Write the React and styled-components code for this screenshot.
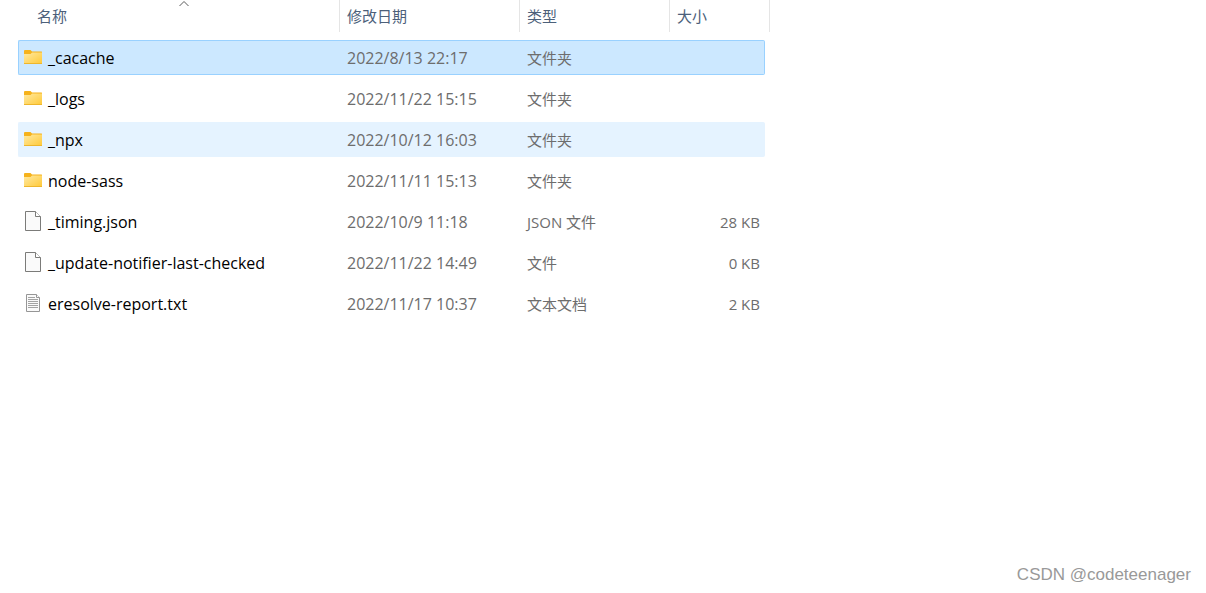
import React from "react";
import styled, { createGlobalStyle, css } from "styled-components";

const GlobalStyle = createGlobalStyle`
  *, *::before, *::after { box-sizing: border-box; }
  body {
    margin: 0;
    background: #fff;
    font-family: "Open Sans", "Noto Sans CJK SC", sans-serif;
  }
`;

const Page = styled.main`
  display: flex;
  flex-direction: column;
  min-height: 100vh;
  padding-left: 18px;
`;

const FileTable = styled.table`
  width: 100%;
  max-width: 752px;
  margin-top: -6px;
  table-layout: fixed;
  border-collapse: separate;
  border-spacing: 0 6px;
`;

const Column = styled.col`
  width: ${(p) => p.$width || "auto"};
`;

const HeaderCell = styled.th`
  padding: 0 0 2px ${(p) => (p.$first ? "12px" : "0")};
`;

const SortButton = styled.button`
  position: relative;
  display: block;
  width: 100%;
  height: 32px;
  padding: 0 7px;
  border: 0;
  border-right: 1px solid #e5e5e5;
  background: none;
  color: #4c607a;
  font-family: inherit;
  font-size: 15px;
  line-height: 32px;
  text-align: left;
`;

const SortArrow = styled.svg`
  position: absolute;
  top: 0;
  left: 50%;
  width: 10px;
  height: 7px;
  margin-left: -5px;
`;

const highlights = {
  selected: css`
    background: #cce8ff;
    border-color: #99d1ff;
  `,
  hovered: css`
    background: #e5f3ff;
    border-color: #e5f3ff;
  `,
};

const Cell = styled.td`
  height: 35px;
  padding: 0 7px;
  border: 1px solid transparent;
  border-width: 1px 0;
  color: #6d6d6d;
  font-size: ${(p) => (p.$latin ? "16px" : "15px")};
  line-height: 24px;
  text-align: ${(p) => (p.$end ? "right" : "left")};
  white-space: nowrap;
  ${(p) => highlights[p.$state]}

  &:first-child {
    padding-left: 5px;
    border-left-width: 1px;
    border-radius: 2px 0 0 2px;
  }

  &:last-child {
    padding-right: 4px;
    border-right-width: 1px;
    border-radius: 0 2px 2px 0;
  }
`;

const FileName = styled.span`
  display: flex;
  align-items: center;
  gap: 6px;
  color: #000;
`;

const FileIcon = styled.svg`
  flex: none;
  width: 18px;
  height: 20px;
  margin-bottom: 2px;
`;

const Watermark = styled.footer`
  margin-top: auto;
  padding: 0 15px 6px 0;
  color: #999;
  font-family: "Liberation Sans", sans-serif;
  font-size: 17px;
  line-height: 24px;
  text-align: right;
`;

function FolderIcon() {
  return (
    <FileIcon viewBox="0 0 18 20" aria-hidden="true">
      <defs>
        <linearGradient id="folder" x1="0" y1="0" x2="1" y2="1">
          <stop offset="0" stopColor="#ffe9a2" />
          <stop offset="1" stopColor="#ffc937" />
        </linearGradient>
      </defs>
      <path d="M0 4q0-1 1-1h5.500l1.500 1.500h9.500q.5 0 .5.500V8H0z" fill="#f6b21b" />
      <path d="M0 7h6.500l1.500-1.500H18v11q0 .5-.5.500H.5q-.5 0-.5-.5z" fill="url(#folder)" />
      <path d="M0 16.500h18" stroke="#eeb62c" strokeWidth="1" />
    </FileIcon>
  );
}

function BlankIcon() {
  return (
    <FileIcon viewBox="0 0 18 20" aria-hidden="true">
      <path d="M1.500.5h10l5 5v14h-15z" fill="#fafafa" stroke="#7b7b79" />
      <path d="M11.500.5v5h5" fill="#fff" stroke="#7b7b79" />
    </FileIcon>
  );
}

function TextIcon() {
  return (
    <FileIcon viewBox="0 0 18 20" aria-hidden="true">
      <path d="M2.500 1.500h10l3 3v14h-13z" fill="#fafafa" stroke="#969696" />
      <path d="M12.500 1.500v3h3" fill="#fff" stroke="#969696" />
      <path
        d="M4 4.500h7M4 6.500h10M4 8.500h10M4 10.500h10M4 12.500h10M4 14.500h10"
        stroke="#a3a3a3"
      />
    </FileIcon>
  );
}

const icons = { folder: FolderIcon, blank: BlankIcon, text: TextIcon };

const files = [
  { icon: "folder", name: "_cacache", date: "2022/8/13 22:17", type: "文件夹", size: "", state: "selected" },
  { icon: "folder", name: "_logs", date: "2022/11/22 15:15", type: "文件夹", size: "" },
  { icon: "folder", name: "_npx", date: "2022/10/12 16:03", type: "文件夹", size: "", state: "hovered" },
  { icon: "folder", name: "node-sass", date: "2022/11/11 15:13", type: "文件夹", size: "" },
  { icon: "blank", name: "_timing.json", date: "2022/10/9 11:18", type: "JSON 文件", size: "28 KB" },
  { icon: "blank", name: "_update-notifier-last-checked", date: "2022/11/22 14:49", type: "文件", size: "0 KB" },
  { icon: "text", name: "eresolve-report.txt", date: "2022/11/17 10:37", type: "文本文档", size: "2 KB" },
];

function FileRow({ file }) {
  const Icon = icons[file.icon];
  return (
    <tr aria-selected={file.state === "selected"}>
      <Cell $state={file.state} $latin>
        <FileName>
          <Icon />
          {file.name}
        </FileName>
      </Cell>
      <Cell $state={file.state} $latin>{file.date}</Cell>
      <Cell $state={file.state}>{file.type}</Cell>
      <Cell $state={file.state} $end>{file.size}</Cell>
    </tr>
  );
}

export default function App() {
  return (
    <>
      <GlobalStyle />
      <Page>
        <FileTable>
          <colgroup>
            <Column />
            <Column $width="180px" />
            <Column $width="150px" />
            <Column $width="95px" />
            <Column $width="5px" />
          </colgroup>
          <thead>
            <tr>
              <HeaderCell $first aria-sort="ascending">
                <SortButton type="button">
                  名称
                  <SortArrow viewBox="0 0 10 7" aria-hidden="true">
                    <path d="M.5 6 5 1.500 9.500 6" fill="none" stroke="#5a5a5a" />
                  </SortArrow>
                </SortButton>
              </HeaderCell>
              <HeaderCell><SortButton type="button">修改日期</SortButton></HeaderCell>
              <HeaderCell><SortButton type="button">类型</SortButton></HeaderCell>
              <HeaderCell colSpan={2}><SortButton type="button">大小</SortButton></HeaderCell>
            </tr>
          </thead>
          <tbody>
            {files.map((file) => (
              <FileRow key={file.name} file={file} />
            ))}
          </tbody>
        </FileTable>
        <Watermark>CSDN @codeteenager</Watermark>
      </Page>
    </>
  );
}
